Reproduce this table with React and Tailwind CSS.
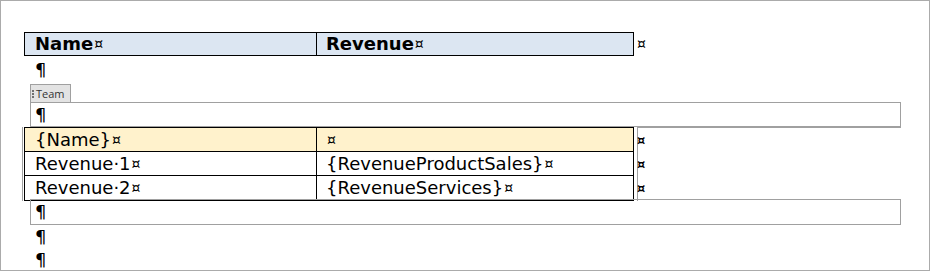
import React from 'react';

const grayLine = 'border-[#a0a0a0]';

const Mark = ({ className = '' }) => (
    <span className={`text-[14px] font-normal leading-none ml-[1px] ${className}`}>¤</span>
);

const Pilcrow = () => <span className="text-[18px] leading-none">¶</span>;

const rows = [
    { left: '{Name}', right: '', bg: 'bg-[#fff2cc]' },
    { left: 'Revenue·1', right: '{RevenueProductSales}', bg: 'bg-white' },
    { left: 'Revenue·2', right: '{RevenueServices}', bg: 'bg-white' },
];

export default function App() {
    return (
        <div className="w-[930px] h-[271px] border border-[#ababab] bg-white overflow-hidden text-black font-['DejaVu_Sans',sans-serif] text-[18px] leading-[24px]">
            <div className="pt-[31px] pl-[21px] flex flex-col">
                {/* header table */}
                <div className="flex items-center">
                    <div className="ml-[2px] w-[610px] h-[24px] border border-black bg-[#dce6f2] flex font-bold">
                        <div className="w-[292px] border-r border-black pl-[10px] flex items-center">
                            Name<Mark />
                        </div>
                        <div className="flex-1 pl-[9px] flex items-center">
                            Revenue<Mark />
                        </div>
                    </div>
                    <Mark className="ml-[3px]" />
                </div>

                <div className="h-[28px] pl-[13px] flex items-center">
                    <Pilcrow />
                </div>

                {/* content control tab */}
                <div className={`ml-[8px] w-[41px] h-[18px] bg-[#e3e3e3] border border-b-0 ${grayLine} flex items-center gap-[2px] pl-[1px]`}>
                    <div className="flex flex-col gap-[1px]">
                        <span className="w-[2px] h-[2px] bg-[#707070]" />
                        <span className="w-[2px] h-[2px] bg-[#707070]" />
                        <span className="w-[2px] h-[2px] bg-[#707070]" />
                    </div>
                    <span className="text-[11px] leading-none text-[#333] font-['Open_Sans',sans-serif]">Team</span>
                </div>

                {/* repeating section */}
                <div className={`ml-[8px] w-[871px] h-[25px] border ${grayLine} pl-[4px] flex items-center`}>
                    <Pilcrow />
                </div>

                <div className="flex">
                    <div className={`border-l ${grayLine} pl-[1px] h-[74px]`}>
                        <div className="w-[610px] border border-black">
                            {rows.map((r, i) => (
                                <div
                                    key={i}
                                    className={`flex h-[24px] ${r.bg} ${i < rows.length - 1 ? 'border-b border-black' : 'h-[23px]'}`}
                                >
                                    <div className="w-[292px] border-r border-black pl-[10px] flex items-center">
                                        {r.left}<Mark />
                                    </div>
                                    <div className="flex-1 pl-[9px] flex items-center">
                                        {r.right}<Mark />
                                    </div>
                                </div>
                            ))}
                        </div>
                    </div>
                    <div className={`ml-[3px] w-[264px] border-l border-t ${grayLine} flex flex-col`}>
                        {rows.map((r, i) => (
                            <div key={i} className="h-[24px] flex items-center">
                                <span className="text-[13px] font-bold leading-none -ml-[1px]">¤</span>
                            </div>
                        ))}
                    </div>
                </div>

                <div className={`ml-[8px] -mt-[2px] w-[871px] h-[26px] border ${grayLine} pl-[4px] flex items-center`}>
                    <Pilcrow />
                </div>

                <div className="h-[23px] pl-[13px] flex items-center">
                    <Pilcrow />
                </div>
                <div className="h-[23px] pl-[13px] flex items-center">
                    <Pilcrow />
                </div>
            </div>
        </div>
    );
}
